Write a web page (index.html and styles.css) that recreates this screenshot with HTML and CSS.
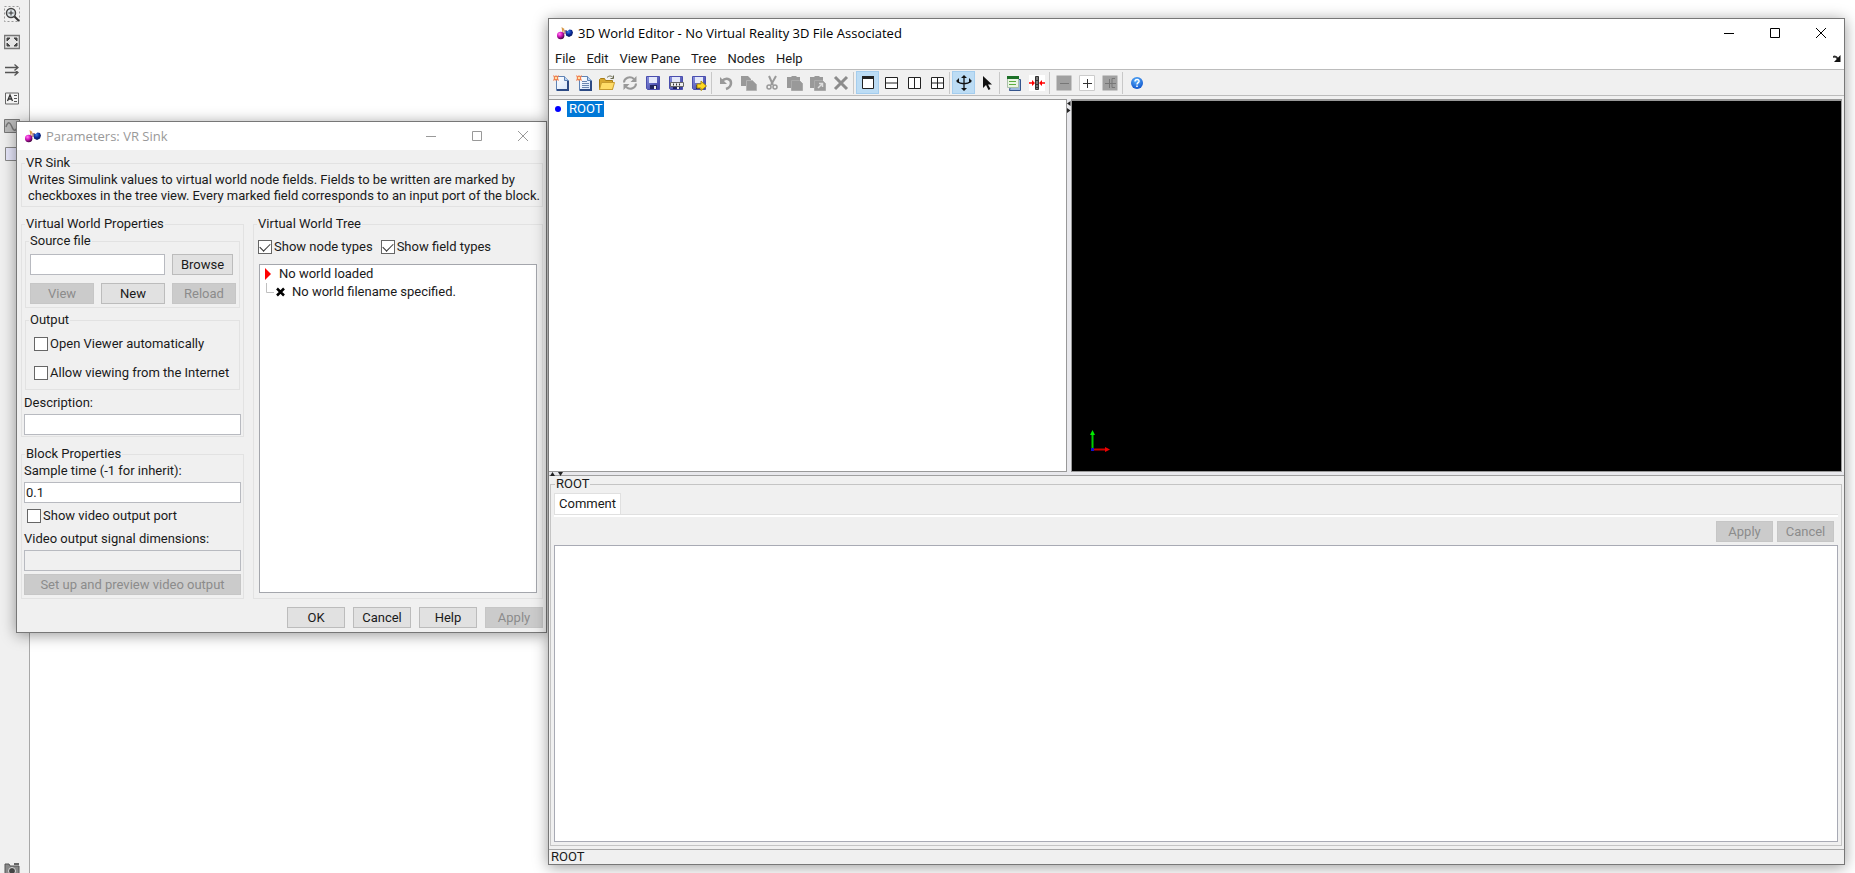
FILE: index.html
```html
<!DOCTYPE html>
<html lang="en">
<head>
    <meta charset="UTF-8">
    <meta name="viewport" content="width=device-width, initial-scale=1.0">
    <title>3D World Editor</title>
    <link rel="stylesheet" href="styles.css">
</head>
<body>
    <!-- shared icon shapes -->
    <svg class="defs" width="0" height="0">
        <defs>
            <radialGradient id="pink" cx="35%" cy="30%" r="75%"><stop offset="0" stop-color="#ff8cf0"/><stop offset=".4" stop-color="#e01cc8"/><stop offset="1" stop-color="#3a0038"/></radialGradient>
            <radialGradient id="navy" cx="40%" cy="30%" r="75%"><stop offset="0" stop-color="#3f7fe8"/><stop offset=".5" stop-color="#0a2c9c"/><stop offset="1" stop-color="#04104a"/></radialGradient>
            <radialGradient id="helpBlue" cx="45%" cy="30%" r="75%"><stop offset="0" stop-color="#5cb4ff"/><stop offset="1" stop-color="#0a4ec8"/></radialGradient>
            <linearGradient id="paper" x1="0" y1="0" x2="1" y2="1"><stop offset="0" stop-color="#fff"/><stop offset="1" stop-color="#d4e4fa"/></linearGradient>
            <linearGradient id="disk" x1="0" y1="0" x2="1" y2="1"><stop offset="0" stop-color="#8a92e0"/><stop offset="1" stop-color="#34389c"/></linearGradient>
            <symbol id="logo" viewBox="0 0 16 16">
                <path d="M4.500 2l3 2-2 4z" fill="#d89848"/><path d="M7 5h3v4H6z" fill="#c89a90"/>
                <circle cx="3.700" cy="10.500" r="3.700" fill="url(#pink)"/>
                <path d="M8.500 5.500l2 .5 2-1.500 2.500.500 1 2.500-1 3-3 1.500-3-1.500z" fill="url(#navy)"/>
            </symbol>
            <symbol id="page" viewBox="0 0 16 16">
                <path d="M3.500 1.500h8l4 4v10h-12z" fill="url(#paper)" stroke="#5f82b4"/>
                <path d="M11.500 1.500v4h4" fill="#b8d0f0" stroke="#5f82b4"/>
                <path d="M15 6v9H4" fill="none" stroke="#2c4a84" stroke-width="2"/>
                <path d="M0 0l2 1.200L3 0l1 1.200L6 0 5 3l1 3-2-1-1 1-1-1-2 1 1-3z" fill="#f08050"/><path d="M2 2h2v2H2z" fill="#ffe0a0"/>
            </symbol>
            <symbol id="disk-shape" viewBox="0 0 16 16">
                <path d="M1.500 1.500h13v13h-12l-1-1z" fill="url(#disk)" stroke="#4a4eae"/>
                <path d="M4 2h8v6H4z" fill="#e4e8fa"/><path d="M5 10h7v4H5z" fill="#20245c"/><path d="M9 11h2v3H9z" fill="#eee"/>
            </symbol>
        </defs>
    </svg>

    <nav class="palette" aria-label="Model tools">
        <svg width="16" height="16" viewBox="0 0 16 16"><path d="M.5.5h15v15H.5z" fill="none" stroke="#999" stroke-dasharray="2 2"/><circle cx="7" cy="7" r="4.500" fill="#dfe6ea" stroke="#444" stroke-width="1.500"/><path d="M7 4.500v5M4.500 7h5" stroke="#333"/><path d="M10.500 10.500l4.500 4.500" stroke="#333" stroke-width="2"/></svg>
        <svg width="16" height="16" viewBox="0 0 16 16"><path d="M.5 1.500h15v13H.5z" fill="#e4e4e4" stroke="#777" stroke-width="1.500"/><path d="M3 4h3L3 7zM13 4v3l-3-3zM13 12h-3l3-3zM3 12V9l3 3z" fill="#444" stroke="#444"/></svg>
        <svg width="16" height="16" viewBox="0 0 16 16"><path d="M1 5.500h13M1 10.500h13M10.500 2.500l3.500 3-3.500 3M10.500 7.500l3.500 3-3.500 3" fill="none" stroke="#555" stroke-width="1.300"/></svg>
        <svg width="16" height="16" viewBox="0 0 16 16"><path d="M1.500 3h13v11h-13z" fill="#f4f4f4" stroke="#666"/><path d="M3.500 11l2.500-6 2.500 6M4.500 9h3" fill="none" stroke="#333" stroke-width="1.300"/><path d="M10 5.500h3M10 8.500h3M10 11.500h3" stroke="#555"/></svg>
        <svg width="16" height="16" viewBox="0 0 16 16"><path d="M.5 1.500h15v13H.5z" fill="#bbb" stroke="#777"/><path d="M2 9c2-6 4-5 6 0s4 4 6-1" fill="none" stroke="#777" stroke-width="1.500"/></svg>
        <svg width="16" height="16" viewBox="0 0 16 16"><path d="M1.500 1.500h14v13h-14z" fill="#e6e6fa" stroke="#888"/></svg>
        <svg class="camera" width="16" height="16" viewBox="0 0 16 16"><path d="M1 3h4l1 2h9v10H1z" fill="#888" stroke="#555"/><circle cx="8" cy="10" r="3.500" fill="#444" stroke="#ddd"/><path d="M10 2h5v2h-5z" fill="#666"/></svg>
    </nav>

    <section class="window dialog" aria-label="Parameters: VR Sink">
        <header class="titlebar inactive">
            <svg class="app-icon" width="16" height="16"><use href="#logo"/></svg>
            <h2>Parameters: VR Sink</h2>
            <button class="caption" aria-label="Minimize"><svg width="10" height="10"><path d="M0 5.500h10" stroke="currentColor"/></svg></button>
            <button class="caption" aria-label="Maximize"><svg width="10" height="10"><path d="M.5.5h9v9h-9z" fill="none" stroke="currentColor"/></svg></button>
            <button class="caption" aria-label="Close"><svg width="10" height="10"><path d="M0 0l10 10M10 0L0 10" stroke="currentColor"/></svg></button>
        </header>
        <form class="dialog-body">
            <fieldset class="about">
                <legend>VR Sink</legend>
                <p>Writes Simulink values to virtual world node fields. Fields to be written are marked by<br>checkboxes in the tree view. Every marked field corresponds to an input port of the block.</p>
            </fieldset>

            <div class="columns">
                <div class="left-column">
                    <fieldset class="world">
                        <legend>Virtual World Properties</legend>
                        <fieldset class="source">
                            <legend>Source file</legend>
                            <div class="source-grid">
                                <input type="text" class="file" aria-label="Source file">
                                <button type="button" class="browse">Browse</button>
                                <button type="button" disabled>View</button>
                                <button type="button">New</button>
                                <button type="button" disabled>Reload</button>
                            </div>
                        </fieldset>
                        <fieldset class="output">
                            <legend>Output</legend>
                            <label class="check"><input type="checkbox">Open Viewer automatically</label>
                            <label class="check"><input type="checkbox">Allow viewing from the Internet</label>
                        </fieldset>
                        <label class="field description">Description:<input type="text"></label>
                    </fieldset>
                    <fieldset class="block">
                        <legend>Block Properties</legend>
                        <label class="field">Sample time (-1 for inherit):<input type="text" value="0.1"></label>
                        <label class="check"><input type="checkbox">Show video output port</label>
                        <label class="field">Video output signal dimensions:<input type="text" disabled></label>
                        <button type="button" class="wide" disabled>Set up and preview video output</button>
                    </fieldset>
                </div>
                <fieldset class="tree">
                    <legend>Virtual World Tree</legend>
                    <div class="tree-options">
                        <label class="check"><input type="checkbox" checked>Show node types</label>
                        <label class="check"><input type="checkbox" checked>Show field types</label>
                    </div>
                    <ul class="tree-box">
                        <li><svg width="16" height="18"><path d="M5 3l6 6-6 6z" fill="#f00"/></svg>No world loaded</li>
                        <li class="child"><svg width="24" height="18"><path d="M1.500 0v9.500H9" fill="none" stroke="#c0c0c0"/><path d="M12 5.500l7 7M19 5.500l-7 7" stroke="#000" stroke-width="2.500"/></svg>No world filename specified.</li>
                    </ul>
                </fieldset>
            </div>

            <footer class="dialog-buttons">
                <button type="button">OK</button>
                <button type="button">Cancel</button>
                <button type="button">Help</button>
                <button type="button" disabled>Apply</button>
            </footer>
        </form>
    </section>

    <main class="window editor">
        <header class="titlebar">
            <svg class="app-icon" width="16" height="16"><use href="#logo"/></svg>
            <h1>3D World Editor - No Virtual Reality 3D File Associated</h1>
            <button class="caption" aria-label="Minimize"><svg width="10" height="10"><path d="M0 5.500h10" stroke="currentColor"/></svg></button>
            <button class="caption" aria-label="Maximize"><svg width="10" height="10"><path d="M.5.5h9v9h-9z" fill="none" stroke="currentColor"/></svg></button>
            <button class="caption" aria-label="Close"><svg width="10" height="10"><path d="M0 0l10 10M10 0L0 10" stroke="currentColor"/></svg></button>
        </header>
        <nav class="menubar">
            <a href="#">File</a>
            <a href="#">Edit</a>
            <a href="#">View Pane</a>
            <a href="#">Tree</a>
            <a href="#">Nodes</a>
            <a href="#">Help</a>
            <svg class="dock" width="8" height="8"><path d="M0 2c2-1 3-1 5 2" fill="none" stroke="#333" stroke-width="2"/><path d="M7.500 0v7H1z" fill="#111"/></svg>
        </nav>
        <div class="toolbar" role="toolbar">
            <button aria-label="New"><svg width="16" height="16"><use href="#page"/></svg></button>
            <button aria-label="New from template"><svg width="16" height="16"><use href="#page"/><path d="M6 6.500h5M6 8.500h7M6 10.500h7M6 12.500h7" stroke="#6a86b0"/></svg></button>
            <button aria-label="Open"><svg width="16" height="16"><path d="M.5 14.500v-10l1-1h4l1 2h7v9z" fill="#d8a830" stroke="#a87c14"/><path d="M.5 14.500l2-7h13l-2 7z" fill="#ffdc68" stroke="#c89c30"/><path d="M8 2.500c2-2 4-2 6 0M14.500.5v3h-3" fill="none" stroke="#6a6a50"/></svg></button>
            <button aria-label="Reload"><svg width="16" height="16"><path d="M2 7.500C2 3 8 .5 12 4M14 8.500c0 4.500-6 7-10 3.500" fill="none" stroke="#999" stroke-width="2"/><path d="M14.500 1v6h-6zM1.500 15V9h6z" fill="#999"/></svg></button>
            <button aria-label="Save"><svg width="16" height="16"><use href="#disk-shape"/></svg></button>
            <button aria-label="Save as"><svg width="16" height="16"><use href="#disk-shape"/><path d="M2.500 7.500h13v4h-13z" fill="#eee" stroke="#666"/><path d="M5 9.500h1M8 9.500h1M11 9.500h1" stroke="#333" stroke-width="2"/></svg></button>
            <button aria-label="Export"><svg width="16" height="16"><use href="#disk-shape"/><path d="M6 9h4V6l5.500 5-5.500 4.500V13H6z" fill="#ffd820" stroke="#a88a10"/></svg></button>
            <i class="sep"></i>
            <button aria-label="Undo"><svg width="16" height="16"><path d="M4 6c4-4 9-2 9 2 0 3-2 5-5 6" fill="none" stroke="#999" stroke-width="2.500"/><path d="M2 2v7h7z" fill="#999"/></svg></button>
            <button aria-label="Copy"><svg width="16" height="16"><path d="M0 1h7l3 3v7H0z" fill="#999"/><path d="M5.500 5.500h6l4 4v6h-10z" fill="#999" stroke="#b4b4b4"/></svg></button>
            <button aria-label="Cut"><svg width="16" height="16"><path d="M5 1l4 9M12 1L7 10" stroke="#999" stroke-width="2"/><circle cx="5" cy="12" r="2" fill="none" stroke="#999" stroke-width="1.500"/><circle cx="11" cy="12" r="2" fill="none" stroke="#999" stroke-width="1.500"/></svg></button>
            <button aria-label="Paste"><svg width="16" height="16"><path d="M0 2h4l1-1h4l1 1h3v11H0z" fill="#999"/><path d="M4.500 5.500h8l3 3v7h-11z" fill="#999" stroke="#aaa"/></svg></button>
            <button aria-label="Paste link"><svg width="16" height="16"><path d="M0 2h4l1-1h4l1 1h3v11H0z" fill="#999"/><path d="M4.500 5.500h8l3 3v7h-11z" fill="#999" stroke="#aaa"/><path d="M8 13l4-4M9 8.500h3.500V12" fill="none" stroke="#ddd" stroke-width="1.500"/></svg></button>
            <button aria-label="Delete"><svg width="16" height="16"><path d="M2 2l12 12M14 2L2 14" stroke="#8c8c8c" stroke-width="3"/></svg></button>
            <i class="sep"></i>
            <button class="on" aria-label="Single view"><svg width="16" height="16"><path d="M2.500 2.500h11v11h-11z" fill="#fff" stroke="#222"/><path d="M2 2.500h12" stroke="#222" stroke-width="3"/></svg></button>
            <button aria-label="Horizontal split"><svg width="16" height="16"><path d="M2.500 2.500h12v11h-12zM2 8h13" fill="#fff" stroke="#222"/></svg></button>
            <button aria-label="Vertical split"><svg width="16" height="16"><path d="M2.500 2.500h12v11h-12zM8.500 2v12" fill="#fff" stroke="#222"/></svg></button>
            <button aria-label="Four views"><svg width="16" height="16"><path d="M2.500 2.500h12v11h-12zM8.500 2v12M2 8h13" fill="#fff" stroke="#222"/></svg></button>
            <i class="sep"></i>
            <button class="on" aria-label="Navigate"><svg width="16" height="16"><path d="M8 2v12M1 6.500c4 3 10 3 14 0" fill="none" stroke="#111" stroke-width="1.300"/><path d="M8 0l3 3H5zM8 16l3-3H5zM0 6l3-3v5zM16 6l-3-3v5z" fill="#111"/></svg></button>
            <button aria-label="Select"><svg width="16" height="16"><path d="M4 1v12l3-3 2.500 5 2-1L9 9.500h4z" fill="#111"/></svg></button>
            <i class="sep"></i>
            <button aria-label="Object library"><svg width="16" height="16"><path d="M5.500 4.500h9v11h-11z" fill="#9cb8e0" stroke="#34548c"/><path d="M1.500 1.500h11v11h-11z" fill="#eaf4e4" stroke="#a8c0a8"/><path d="M1 2.500h12" stroke="#1c7028" stroke-width="3"/><path d="M3 6.500h7M3 9.500h7" stroke="#5cae40"/></svg></button>
            <button class="light" aria-label="Transform"><svg width="16" height="16"><path d="M6.500 1.500h3v13h-3zM6 5.500h4M6 9.500h4M6 12.500h4" fill="#777" stroke="#333"/><path d="M0 8h4M12 8h4" stroke="#f00" stroke-width="1.500"/><path d="M3 5l3 3-3 3zM13 5l-3 3 3 3z" fill="#f00"/></svg></button>
            <i class="sep"></i>
            <button aria-label="Collapse"><svg width="16" height="16"><path d="M.5.5h15v15H.5z" fill="#a0a0a0"/><path d="M4 8.500h9" stroke="#777"/></svg></button>
            <button aria-label="Expand"><svg width="16" height="16"><path d="M.5.5h15v15H.5z" fill="#fff" stroke="#ccc"/><path d="M4 8.500h9M8.500 4v9" stroke="#333"/></svg></button>
            <button aria-label="Expand all"><svg width="16" height="16"><path d="M.5.5h15v15H.5z" fill="#a0a0a0"/><path d="M3 8.500h9M7.500 4v9M13 3.500h-3v9h3M10 8.500h4" fill="none" stroke="#777"/></svg></button>
            <i class="sep"></i>
            <button aria-label="Help"><svg width="16" height="16"><circle cx="8" cy="8" r="6" fill="url(#helpBlue)"/><path d="M6 6.500c0-3 4.500-2.500 4 0-.3 1.200-2 1.200-2 3" fill="none" stroke="#fff" stroke-width="1.500"/><path d="M7.200 10.500h1.600v1.600H7.200z" fill="#fff"/></svg></button>
        </div>

        <div class="panes">
            <ul class="scene-tree">
                <li><span class="dot"></span><span class="selected">ROOT</span></li>
            </ul>
            <div class="splitter vertical"><svg width="4" height="16"><path d="M3.500 2v5L0 4.500z" fill="#222"/><path d="M0 9v5l3.500-2.500z" fill="#222"/></svg></div>
            <div class="viewport">
                <svg class="axes" width="24" height="24"><path d="M3.500 20V4" stroke="#0c0" stroke-width="2"/><path d="M3.500 0l2.500 5H1z" fill="#0e0"/><path d="M4 19.500h14" stroke="#c00" stroke-width="2"/><path d="M16 17l5 2.500-5 2.500z" fill="#e00"/><path d="M2 18h3v3H2z" fill="#11c"/></svg>
            </div>
        </div>
        <div class="splitter horizontal"><svg width="16" height="4"><path d="M1 4h5L3.500 0z" fill="#222"/><path d="M9 0h5l-2.500 4z" fill="#222"/></svg></div>

        <fieldset class="node">
            <legend>ROOT</legend>
            <div class="tabs"><button class="tab">Comment</button></div>
            <div class="tab-panel">
                <div class="actions">
                    <button disabled>Apply</button>
                    <button disabled>Cancel</button>
                </div>
                <textarea aria-label="Comment"></textarea>
            </div>
        </fieldset>
        <footer class="status">ROOT</footer>
    </main>
</body>
</html>
```
FILE: styles.css
```css
* {
    box-sizing: border-box;
}
body {
    margin: 0;
    height: 100vh;
    position: relative;
    overflow: hidden;
    background: #fff;
    color: #1a1a1a;
    font: 13px/16px Roboto, sans-serif;
}
h1, h2, p, ul {
    margin: 0;
    padding: 0;
    font-size: 13px;
    font-weight: normal;
    list-style: none;
}
button, input, textarea {
    font: inherit;
    color: inherit;
}
svg {
    display: block;
    flex: none;
}
.defs {
    position: absolute;
}

/* tool strip on the left */
.palette {
    width: 30px;
    height: 100%;
    padding: 6px 0 0 4px;
    background: #f0f0f0;
    border-right: 1px solid #a8a8a8;
    display: flex;
    flex-direction: column;
    gap: 12px;
}
.palette .camera {
    margin-top: auto;
    margin-bottom: -4px;
}

/* windows */
.window {
    position: absolute;
    border: 1px solid #777;
    background: #f0f0f0;
    box-shadow: 0 2px 14px rgba(0, 0, 0, 0.4);
}
.dialog {
    left: 16px;
    top: 121px;
    width: 531px;
}
.editor {
    left: 548px;
    top: 18px;
    right: 10px;
    bottom: 8px;
    display: flex;
    flex-direction: column;
}
.titlebar {
    height: 28px;
    padding-left: 8px;
    background: #fff;
    color: #000;
    display: flex;
    align-items: center;
}
.titlebar h1, .titlebar h2 {
    flex: 1;
    padding-left: 5px;
    font-family: "Open Sans", sans-serif;
}
.titlebar.inactive {
    color: #999;
}
.caption {
    width: 46px;
    height: 28px;
    padding: 0;
    border: 0;
    background: none;
    color: inherit;
    display: flex;
    align-items: center;
    justify-content: center;
}

/* form parts */
fieldset {
    min-width: 0;
    margin: 0;
    padding: 0 2px;
    border: 1px solid #e2e2e2;
}
legend {
    margin-left: 1px;
    padding: 0 1px;
    line-height: 16px;
}
.dialog button:not(.caption), .actions button {
    height: 21px;
    padding: 0;
    background: #e1e1e1;
    border: 1px solid #bcbcbc;
}
.dialog button:disabled, .actions button:disabled {
    background: #cbcbcb;
    border-color: #c6c6c6;
    color: #8c8c8c;
}
input[type="text"] {
    display: block;
    width: 100%;
    height: 21px;
    padding: 0 1px;
    background: #fff;
    border: 1px solid #b8bac0;
}
input[type="text"]:disabled {
    background: #f0f0f0;
}
.field input {
    margin-top: 3px;
}
.field {
    display: block;
}
.check {
    display: flex;
    align-items: center;
    gap: 2px;
    height: 16px;
    white-space: nowrap;
}
input[type="checkbox"] {
    appearance: none;
    flex: none;
    width: 14px;
    height: 14px;
    margin: 0;
    background: #fff;
    border: 1px solid #666;
    display: grid;
    place-items: center;
}
input[type="checkbox"]:checked::before {
    content: "";
    width: 9px;
    height: 5px;
    margin-bottom: 3px;
    border: solid #333;
    border-width: 0 0 1px 1px;
    rotate: -45deg;
}

/* parameters dialog */
.dialog-body {
    padding: 5px 3px 4px 4px;
}
.about {
    padding-top: 1px;
    padding-bottom: 2px;
    white-space: nowrap;
}
.about p {
    padding-left: 4px;
}
.columns {
    margin-top: 9px;
    display: grid;
    grid-template-columns: 223px 1fr;
    gap: 9px;
}
.left-column {
    display: flex;
    flex-direction: column;
    gap: 9px;
}
.world {
    padding-top: 1px;
    padding-bottom: 1px;
}
.source, .output {
    margin: 0 1px;
}
.source {
    padding-top: 5px;
    padding-bottom: 3px;
}
.source-grid {
    padding-left: 2px;
    display: grid;
    grid-template-columns: repeat(3, 64px);
    gap: 8px 7px;
}
.file {
    grid-column: span 2;
}
.source-grid .browse {
    width: 61px;
}
.output {
    margin-top: 4px;
    padding-top: 8px;
    padding-bottom: 8px;
}
.output .check {
    padding-left: 6px;
}
.output .check + .check {
    margin-top: 13px;
}
.description {
    margin-top: 5px;
}
.block {
    padding-top: 1px;
    padding-bottom: 3px;
}
.block .check {
    margin: 5px 0 7px 3px;
}
.block .wide {
    width: 100%;
    margin-top: 3px;
    display: block;
}
.tree {
    padding: 7px 2px 5px;
    display: flex;
    flex-direction: column;
}
.tree-options {
    padding-left: 2px;
    display: flex;
    gap: 8px;
}
.tree-box {
    flex: 1;
    margin: 9px 3px 0;
    background: #fff;
    border: 1px solid #a4a6ac;
}
.tree-box li {
    height: 18px;
    display: flex;
    align-items: center;
    gap: 3px;
}
.tree-box .child {
    padding-left: 5px;
}
.dialog-buttons {
    margin-top: 8px;
    display: flex;
    justify-content: flex-end;
    gap: 8px;
}
.dialog-buttons button {
    width: 58px;
}

/* world editor */
.menubar {
    height: 23px;
    padding: 2px 3px 0 6px;
    background: #fff;
    border-bottom: 1px solid #bcbcbc;
    display: flex;
    align-items: center;
    gap: 11px;
}
.menubar a {
    color: inherit;
    text-decoration: none;
}
.dock {
    margin-left: auto;
}
.toolbar {
    height: 26px;
    border-bottom: 1px solid #bcbcbc;
    display: flex;
    align-items: center;
}
.toolbar button {
    width: 23px;
    height: 23px;
    padding: 0;
    border: 0;
    background: none;
    display: grid;
    place-items: center;
}
.toolbar .on {
    background: #bcdcf4;
    border: 1px solid #a4cdee;
}
.light svg {
    background: #fff;
}
.sep {
    width: 1px;
    height: 22px;
    margin: 0 2px 0 1px;
    background: #c8c8c8;
}
.panes {
    flex: 378 1 0;
    min-height: 0;
    margin-top: 3px;
    display: grid;
    grid-template-columns: 518fr 4px 773fr;
}
.scene-tree {
    padding-top: 1px;
    background: #fff;
    border: 1px solid #999;
    border-left: 0;
}
.scene-tree li {
    display: flex;
    align-items: center;
}
.dot {
    width: 6px;
    height: 6px;
    margin: 0 6px;
    border-radius: 50%;
    background: #00f;
}
.selected {
    padding: 0 2px;
    background: #0078d7;
    color: #fff;
}
.splitter {
    background: #e8e8ec;
}
.viewport {
    margin-right: 2px;
    background: #000;
    border: 1px solid #999;
    border-top-width: 2px;
    display: flex;
    align-items: flex-end;
    padding: 0 0 17px 17px;
}
.horizontal {
    height: 4px;
    border-bottom: 1px solid #a0a0a0;
}
.node {
    flex: 368 1 0;
    min-height: 0;
    margin: 0 2px 3px 1px;
    padding: 1px 3px 3px;
    border-color: #c4c4c4;
    display: flex;
    flex-direction: column;
}
.tabs {
    display: flex;
    border-bottom: 1px solid #e0e0e0;
}
.tab {
    height: 21px;
    padding: 0 4px;
    border: 1px solid #e0e0e0;
    border-bottom: 0;
    background: #fff;
}
.tab-panel {
    flex: 1;
    border-top: 2px solid #fff;
    display: flex;
    flex-direction: column;
}
.actions {
    padding: 4px 4px 3px;
    display: flex;
    justify-content: flex-end;
    gap: 4px;
}
.actions button {
    width: 57px;
}
textarea {
    flex: 1;
    width: 100%;
    background: #fff;
    border: 1px solid #a8aab4;
    resize: none;
}
.status {
    height: 15px;
    padding-left: 2px;
    border-top: 1px solid #a8a8a8;
    line-height: 14px;
}
```
